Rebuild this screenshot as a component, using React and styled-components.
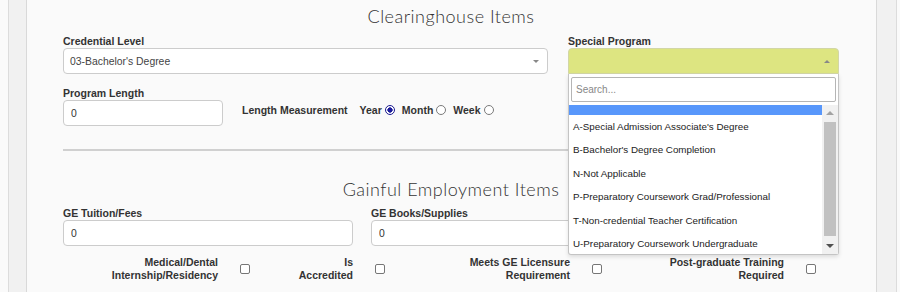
import React from "react";
import styled, { createGlobalStyle } from "styled-components";

const GlobalStyle = createGlobalStyle`
  html, body {
    margin: 0;
    background: #fafafa;
  }
  body {
    font-family: "Liberation Sans", Arial, sans-serif;
    color: #333;
  }
`;

const Shell = styled.div`
  margin-left: 8px;
  width: 889px;
  height: 292px;
  overflow: hidden;
  box-sizing: border-box;
  background: #f1f1f1;
  border-left: 1px solid #dcdcdc;
  border-right: 1px solid #dcdcdc;
  padding-left: 17px;
`;

const Card = styled.div`
  width: 851px;
  height: 100%;
  box-sizing: border-box;
  background: #fafafa;
  border-left: 1px solid #d9d9d9;
  border-right: 1px solid #d9d9d9;
  padding: 5px 37px 0 36px;
`;

const Heading = styled.h3`
  margin: ${(p) => p.$top || 0}px 0 ${(p) => p.$bottom || 8}px;
  text-align: center;
  font-family: Lato, "Open Sans", sans-serif;
  font-weight: 300;
  font-size: 18px;
  letter-spacing: 0.5px;
  line-height: 22px;
  color: #333;
`;

const Row = styled.div`
  display: grid;
  grid-template-columns: ${(p) => p.$cols};
  column-gap: ${(p) => p.$gap || 20}px;
  margin-top: ${(p) => p.$top || 0}px;
`;

const Field = styled.div`
  position: relative;
  display: flex;
  flex-direction: column;
`;

const Label = styled.label`
  font-weight: bold;
  font-size: 10.5px;
  line-height: 13px;
  color: #333;
`;

const SelectBox = styled.div`
  height: 26px;
  box-sizing: border-box;
  display: flex;
  align-items: center;
  padding: 0 8px 0 6px;
  border: 1px solid ${(p) => (p.$open ? "#d2d6a6" : "#ccc")};
  border-radius: ${(p) => (p.$open ? "4px 4px 0 0" : "4px")};
  background: ${(p) => (p.$open ? "#dde581" : "#fff")};
  font-size: 10.4px;
  color: #444;
`;

const Caret = styled.span`
  margin-left: auto;
  width: 0;
  height: 0;
  border-left: 3px solid transparent;
  border-right: 3px solid transparent;
  ${(p) =>
    p.$up
      ? "border-bottom: 3px solid #888;"
      : "border-top: 3px solid #888;"}
`;

const Dropdown = styled.div`
  position: absolute;
  top: 100%;
  left: 0;
  right: 0;
  z-index: 5;
  background: #fff;
  border: 1px solid #c4c4c4;
  border-top: none;
  border-radius: 0 0 3px 3px;
  box-shadow: 0 2px 4px rgba(0, 0, 0, 0.12);
`;

const SearchWrap = styled.div`
  padding: 3px 2px 3px 2px;
`;

const Search = styled.input`
  display: block;
  width: 100%;
  height: 25px;
  box-sizing: border-box;
  border: 1px solid #b5b5b5;
  border-radius: 2px;
  padding: 0 4px;
  font-family: "Liberation Sans", Arial, sans-serif;
  font-size: 10px;
  color: #333;
  outline: none;
  &::placeholder {
    color: #888;
  }
`;

const Results = styled.div`
  display: flex;
  height: 149px;
`;

const OptionList = styled.div`
  flex: 1;
  overflow: hidden;
`;

const OptionTrack = styled.div`
  margin-top: -14px;
`;

const Option = styled.div`
  height: 23.5px;
  display: flex;
  align-items: center;
  padding: 0 4px;
  font-size: 9.8px;
  color: #222;
  background: ${(p) => (p.$active ? "#5897fb" : "transparent")};
`;

const Scrollbar = styled.div`
  width: 16px;
  display: flex;
  flex-direction: column;
  background: #f1f1f1;
`;

const ScrollArrow = styled.div`
  height: 16px;
  display: flex;
  align-items: center;
  justify-content: center;
  &::after {
    content: "";
    width: 0;
    height: 0;
    border-left: 4px solid transparent;
    border-right: 4px solid transparent;
    ${(p) =>
      p.$up
        ? "border-bottom: 4px solid #a3a3a3;"
        : "border-top: 4px solid #505050;"}
  }
`;

const Thumb = styled.div`
  height: 114px;
  margin: 1px 2px 0;
  background: #c1c1c1;
`;

const Spacer = styled.div`
  flex: 1;
`;

const TextInput = styled.input`
  width: ${(p) => p.$w || "100%"};
  height: 26px;
  box-sizing: border-box;
  border: 1px solid #ccc;
  border-radius: 4px;
  padding: 0 7px;
  background: #fff;
  font-family: "Liberation Sans", Arial, sans-serif;
  font-size: 10.4px;
  color: #333;
  outline: none;
`;

const FlexRow = styled.div`
  display: flex;
  align-items: flex-start;
  gap: 19px;
  margin-top: 13px;
`;

const Measurement = styled.div`
  display: flex;
  align-items: center;
  margin-top: 16px;
  font-weight: bold;
  font-size: 10.5px;
  line-height: 14px;
`;

const MeasureTitle = styled.span`
  margin-right: 12px;
`;

const RadioOption = styled.label`
  display: flex;
  align-items: center;
  gap: 3px;
  margin-right: 7px;
`;

const Radio = styled.input.attrs({ type: "radio" })`
  appearance: none;
  margin: 0;
  width: 10px;
  height: 10px;
  border-radius: 50%;
  border: 1px solid #7a7a7a;
  background: #fff;
  &:checked {
    border-color: #1b1b8f;
    background: radial-gradient(circle, #1b1b9c 0 2.4px, #fff 2.9px);
  }
`;

const Rule = styled.div`
  height: 2px;
  margin-top: 23px;
  background: #d0d0d0;
`;

const CheckRow = styled.div`
  display: grid;
  grid-template-columns: 187px 135px 217px 214px;
  margin-top: 10px;
`;

const CheckGroup = styled.div`
  display: flex;
  align-items: center;
  justify-content: flex-end;
  gap: 22px;
`;

const CheckLabel = styled.span`
  max-width: ${(p) => p.$max}px;
  text-align: right;
  font-weight: bold;
  font-size: 10.5px;
  line-height: 12.5px;
  color: #333;
`;

const Checkbox = styled.input.attrs({ type: "checkbox" })`
  appearance: none;
  margin: 0;
  width: 10px;
  height: 10px;
  border: 1px solid #767676;
  border-radius: 2px;
  background: #fff;
`;

const programs = [
  "",
  "A-Special Admission Associate's Degree",
  "B-Bachelor's Degree Completion",
  "N-Not Applicable",
  "P-Preparatory Coursework Grad/Professional",
  "T-Non-credential Teacher Certification",
  "U-Preparatory Coursework Undergraduate",
];

const checks = [
  { text: "Medical/Dental Internship/Residency", max: 155 },
  { text: "Is Accredited", max: 60 },
  { text: "Meets GE Licensure Requirement", max: 120 },
  { text: "Post-graduate Training Required", max: 130 },
];

export default function App() {
  return (
    <>
      <GlobalStyle />
      <Shell>
        <Card>
          <Heading>Clearinghouse Items</Heading>
          <Row $cols="485px 271px">
            <Field>
              <Label>Credential Level</Label>
              <SelectBox>
                03-Bachelor's Degree
                <Caret />
              </SelectBox>
            </Field>
            <Field>
              <Label>Special Program</Label>
              <SelectBox $open>
                <Caret $up />
              </SelectBox>
              <Dropdown>
                <SearchWrap>
                  <Search placeholder="Search..." />
                </SearchWrap>
                <Results>
                  <OptionList>
                    <OptionTrack>
                      {programs.map((p, i) => (
                        <Option key={i} $active={i === 0}>
                          {p}
                        </Option>
                      ))}
                    </OptionTrack>
                  </OptionList>
                  <Scrollbar>
                    <ScrollArrow $up />
                    <Thumb />
                    <Spacer />
                    <ScrollArrow />
                  </Scrollbar>
                </Results>
              </Dropdown>
            </Field>
          </Row>

          <FlexRow>
            <Field>
              <Label>Program Length</Label>
              <TextInput $w="160px" defaultValue="0" />
            </Field>
            <Measurement>
              <MeasureTitle>Length Measurement</MeasureTitle>
              <RadioOption>
                Year <Radio name="len" defaultChecked />
              </RadioOption>
              <RadioOption>
                Month <Radio name="len" />
              </RadioOption>
              <RadioOption>
                Week <Radio name="len" />
              </RadioOption>
            </Measurement>
          </FlexRow>

          <Rule />

          <Heading $top={27} $bottom={7}>
            Gainful Employment Items
          </Heading>
          <Row $cols="290px 290px" $gap={18}>
            <Field>
              <Label>GE Tuition/Fees</Label>
              <TextInput defaultValue="0" />
            </Field>
            <Field>
              <Label>GE Books/Supplies</Label>
              <TextInput defaultValue="0" />
            </Field>
          </Row>

          <CheckRow>
            {checks.map((c) => (
              <CheckGroup key={c.text}>
                <CheckLabel $max={c.max}>{c.text}</CheckLabel>
                <Checkbox />
              </CheckGroup>
            ))}
          </CheckRow>
        </Card>
      </Shell>
    </>
  );
}
